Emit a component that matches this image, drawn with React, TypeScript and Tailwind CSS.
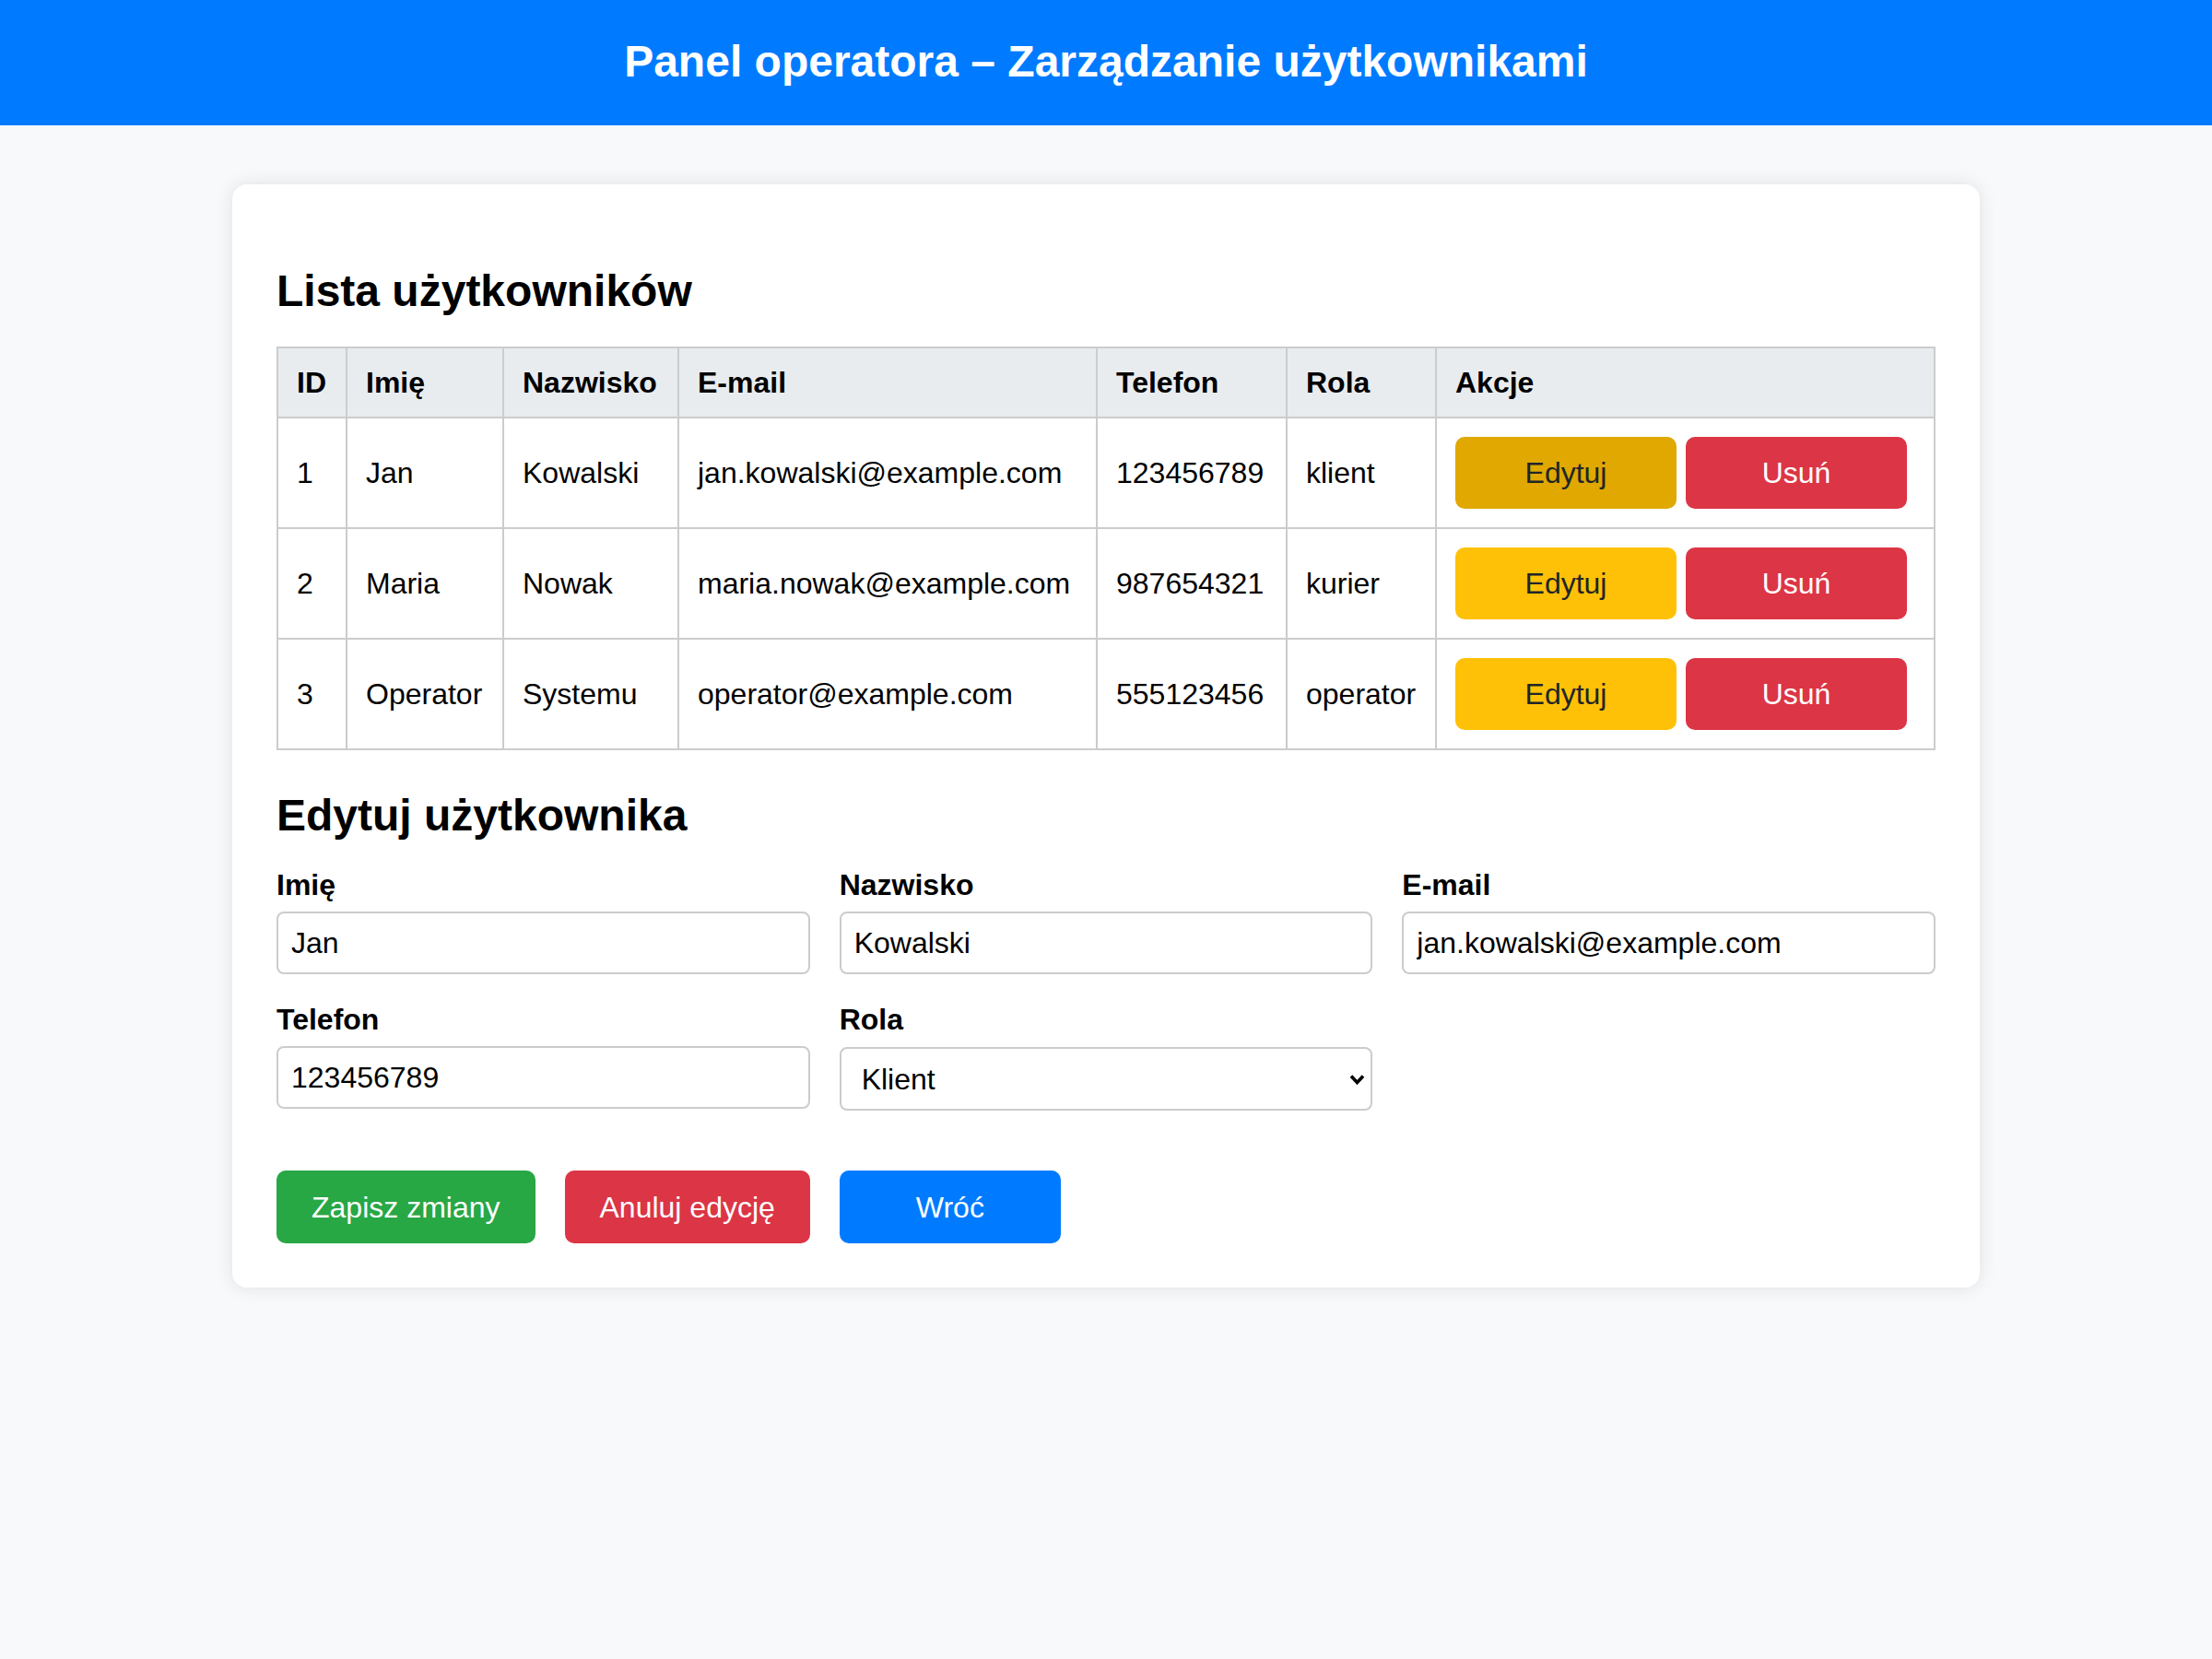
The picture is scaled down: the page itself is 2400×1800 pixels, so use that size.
import React from "react";

type User = {
  id: number;
  first: string;
  last: string;
  email: string;
  phone: string;
  role: string;
};

const users: User[] = [
  { id: 1, first: "Jan", last: "Kowalski", email: "jan.kowalski@example.com", phone: "123456789", role: "klient" },
  { id: 2, first: "Maria", last: "Nowak", email: "maria.nowak@example.com", phone: "987654321", role: "kurier" },
  { id: 3, first: "Operator", last: "Systemu", email: "operator@example.com", phone: "555123456", role: "operator" },
];

function Field({ label, value }: { label: string; value: string }) {
  return (
    <div className="flex flex-col">
      <label className="mb-[10px] text-[32px] font-bold leading-[37px]">{label}</label>
      <input
        defaultValue={value}
        className="h-[68px] w-full rounded-[8px] border-2 border-[#ccc] bg-white px-[14px] text-[32px] leading-[37px] text-black outline-none"
      />
    </div>
  );
}

export default function App() {
  return (
    <div className="min-h-screen bg-[#f8f9fa] text-black [font-family:'Liberation_Sans',Arial,sans-serif]">
      <header className="h-[136px] bg-[#007bff] pt-[39px] text-center">
        <h1 className="text-[48px] font-bold leading-[55px] text-white">
          Panel operatora – Zarządzanie użytkownikami
        </h1>
      </header>

      <main className="mx-auto mt-[64px] w-[1896px] rounded-[16px] bg-white p-[48px] shadow-[0_0_20px_rgba(0,0,0,0.1)]">
        <h2 className="mt-[40px] mb-[33px] text-[48px] font-bold leading-[55px]">Lista użytkowników</h2>

        <table className="w-full table-fixed border-collapse text-[32px]">
          <colgroup>
            <col className="w-[75px]" />
            <col className="w-[170px]" />
            <col className="w-[190px]" />
            <col className="w-[454px]" />
            <col className="w-[206px]" />
            <col className="w-[162px]" />
            <col className="w-[541px]" />
          </colgroup>
          <thead>
            <tr>
              {["ID", "Imię", "Nazwisko", "E-mail", "Telefon", "Rola", "Akcje"].map((h) => (
                <th
                  key={h}
                  className="border-2 border-[#ccc] bg-[#e9ecef] px-[20px] py-[18px] text-left font-bold leading-[38px]"
                >
                  {h}
                </th>
              ))}
            </tr>
          </thead>
          <tbody>
            {users.map((u) => (
              <tr key={u.id}>
                <td className="border-2 border-[#ccc] px-[20px] py-[20px] leading-[38px]">{u.id}</td>
                <td className="border-2 border-[#ccc] px-[20px] py-[20px] leading-[38px]">{u.first}</td>
                <td className="border-2 border-[#ccc] px-[20px] py-[20px] leading-[38px]">{u.last}</td>
                <td className="border-2 border-[#ccc] px-[20px] py-[20px] leading-[38px]">{u.email}</td>
                <td className="border-2 border-[#ccc] px-[20px] py-[20px] leading-[38px]">{u.phone}</td>
                <td className="border-2 border-[#ccc] px-[20px] py-[20px] leading-[38px]">{u.role}</td>
                <td className="border-2 border-[#ccc] px-[20px] py-[20px] leading-[38px]">
                  <div className="flex gap-[10px]">
                    <button
                      className={`flex h-[78px] w-[240px] items-center justify-center rounded-[10px] text-[32px] text-[#212529] ${
                        u.id === 1 ? "bg-[#e0a800]" : "bg-[#ffc107]"
                      }`}
                    >
                      Edytuj
                    </button>
                    <button className="flex h-[78px] w-[240px] items-center justify-center rounded-[10px] bg-[#dc3545] text-[32px] text-white">
                      Usuń
                    </button>
                  </div>
                </td>
              </tr>
            ))}
          </tbody>
        </table>

        <h2 className="mt-[43px] mb-[30px] text-[48px] font-bold leading-[55px]">Edytuj użytkownika</h2>

        <div className="grid grid-cols-3 gap-x-[32px] gap-y-[31px]">
          <Field label="Imię" value="Jan" />
          <Field label="Nazwisko" value="Kowalski" />
          <Field label="E-mail" value="jan.kowalski@example.com" />
          <Field label="Telefon" value="123456789" />
          <div className="flex flex-col">
            <label className="mb-[10px] text-[32px] font-bold leading-[37px]">Rola</label>
            <div className="relative mt-[1px]">
              <select
                defaultValue="klient"
                className="h-[69px] w-full appearance-none rounded-[8px] border-2 border-[#ccc] bg-white pl-[22px] pr-[40px] text-[32px] text-black outline-none"
              >
                <option value="klient">Klient</option>
                <option value="kurier">Kurier</option>
                <option value="operator">Operator</option>
              </select>
              <svg
                className="pointer-events-none absolute right-[8px] top-1/2 h-[12px] w-[17px] -translate-y-1/2"
                viewBox="0 0 17 12"
                fill="none"
              >
                <polyline
                  points="2,2.5 8.5,9.5 15,2.5"
                  stroke="#000"
                  strokeWidth="3.6"
                  strokeLinecap="butt"
                  strokeLinejoin="miter"
                />
              </svg>
            </div>
          </div>
        </div>

        <div className="mt-[65px] flex gap-[32px]">
          <button className="flex h-[79px] min-w-[240px] items-center justify-center rounded-[10px] bg-[#28a745] px-[38px] text-[32px] text-white">
            Zapisz zmiany
          </button>
          <button className="flex h-[79px] min-w-[240px] items-center justify-center rounded-[10px] bg-[#dc3545] px-[38px] text-[32px] text-white">
            Anuluj edycję
          </button>
          <button className="flex h-[79px] min-w-[240px] items-center justify-center rounded-[10px] bg-[#007bff] px-[38px] text-[32px] text-white">
            Wróć
          </button>
        </div>
      </main>
    </div>
  );
}
